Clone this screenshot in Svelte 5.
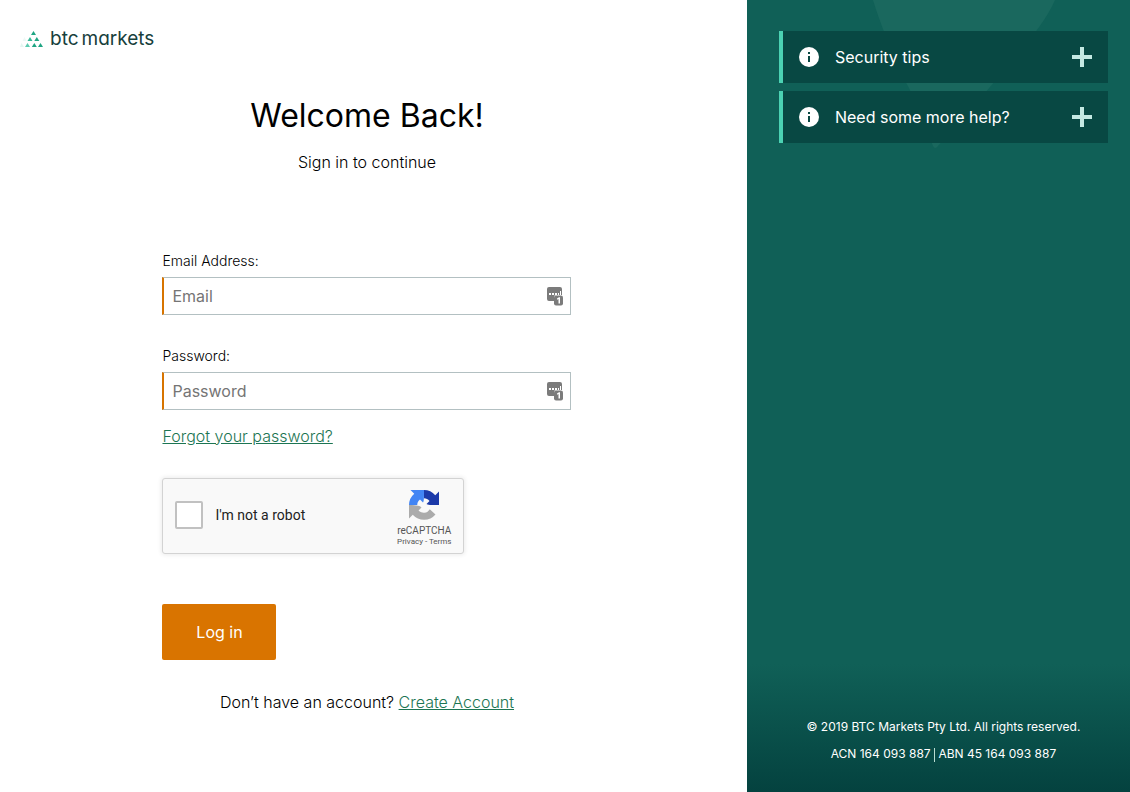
<script>
  const fields = [
    { id: 'email', label: 'Email Address:', placeholder: 'Email', type: 'email' },
    { id: 'password', label: 'Password:', placeholder: 'Password', type: 'password' },
  ];

  const tips = [
    {
      title: 'Security tips',
      body: 'Always check the address bar before you sign in, and never share your password.',
    },
    {
      title: 'Need some more help?',
      body: 'Visit our support centre or get in touch with the team.',
    },
  ];

  let values = $state({ email: '', password: '' });
  let human = $state(false);
  let open = $state(-1);

  function toggle(i) {
    open = open === i ? -1 : i;
  }

  function submit(e) {
    e.preventDefault();
  }
</script>

<div class="page">
  <main class="main">
    <a class="logo" href="#home" aria-label="btc markets">
      <svg width="24" height="18" viewBox="0 0 24 18" aria-hidden="true">
        <g fill="#1fa583">
          <path d="M13.5 1l2.5 4h-5z" />
          <path d="M16.8 7l2.500 4h-5z" />
          <path d="M14.300 13l2.500 4h-5z" />
          <path d="M20.500 13l2.500 4h-5z" />
        </g>
        <path d="M10 7l2.500 4h-5z" fill="#3bb898" />
        <path d="M7.500 13l2.500 4H5z" fill="#5ccbb0" />
        <path d="M1.500 13L4 17H0z" fill="#e3f6f1" />
        <path d="M4.500 7l2 4h-4z" fill="#eef9f6" />
      </svg>
      <span class="logo-text"><span>btc</span><span>markets</span></span>
    </a>

    <header class="intro">
      <h1>Welcome Back!</h1>
      <p>Sign in to continue</p>
    </header>

    <form class="form" onsubmit={submit}>
      {#each fields as field}
        <div class="field">
          <label for={field.id}>{field.label}</label>
          <div class="control">
            <input
              id={field.id}
              type={field.type}
              placeholder={field.placeholder}
              bind:value={values[field.id]}
            />
            <svg class="vault" width="17" height="19" viewBox="0 0 17 19" aria-hidden="true">
              <path
                fill="#7b7b7b"
                d="M2 0h11a2 2 0 0 1 2 2v6H9a2 2 0 0 0-2 2v4H2a2 2 0 0 1-2-2V2a2 2 0 0 1 2-2z"
              />
              <path fill="#fff" d="M2 6h2v2H2zM5 6h2v2H5zM8 6h2v2H8zM11 6h1v2h-1zM13 4h1v4h-1z" />
              <rect x="7" y="8.5" width="9" height="10" rx="2" fill="#7b7b7b" />
              <path fill="#fff" d="M10 11.500l2-1.300H13v6.300H11.500v-4.600l-1.500.8z" />
            </svg>
          </div>
        </div>
      {/each}

      <a class="forgot" href="#forgot">Forgot your password?</a>

      <div class="captcha">
        <label class="robot">
          <input type="checkbox" bind:checked={human} />
          <span>I'm not a robot</span>
        </label>
        <div class="brand">
          <svg width="32" height="32" viewBox="0 0 64 64" aria-hidden="true">
            <path
              fill="#1c3aa9"
              d="M62 32V5l-7.5 7.500A30 30 0 0 0 32 2v16.500c4.500 0 8 1.500 11 5.500l-6 6c2 2 8 2 25 2z"
            />
            <path
              fill="#4285f4"
              d="M32 2H5l7.500 7.500A30 30 0 0 0 2 32h16.500c0-4.500 1.500-8 5.500-11l6 6c2-2 2-8 2-25z"
            />
            <path
              fill="#ababab"
              d="M2 32v27l7.500-7.500A30 30 0 0 0 55 51L43.500 40.500A14 14 0 0 1 21 43l6-6c-2-3-8-5-25-5z"
            />
          </svg>
          <span class="brand-name">reCAPTCHA</span>
          <span class="brand-links"><a href="#privacy">Privacy</a> - <a href="#terms">Terms</a></span>
        </div>
      </div>

      <button class="login" type="submit">Log in</button>

      <p class="signup">Don’t have an account? <a href="#create">Create Account</a></p>
    </form>
  </main>

  <aside class="side">
    <svg class="shape" width="383" height="160" viewBox="0 0 383 160" aria-hidden="true">
      <path fill="#1a685e" d="M126 0C132 20 148 62 162 88Q174 114 186 146Q188 150 191 146Q222 112 243 87C265 60 296 28 308 0z" />
    </svg>

    <div class="tips">
      {#each tips as tip, i}
        <section class="tip">
          <button class="tip-head" type="button" aria-expanded={open === i} onclick={() => toggle(i)}>
            <svg width="20" height="20" viewBox="0 0 20 20" aria-hidden="true">
              <circle cx="10" cy="10" r="10" fill="#fff" />
              <path fill="#084843" d="M9 5h2v2H9zM9 9h2v6H9z" />
            </svg>
            <span class="tip-title">{tip.title}</span>
            <svg width="20" height="20" viewBox="0 0 20 20" aria-hidden="true">
              <path fill="#c4e9e3" d="M0 8h20v4H0z" />
              {#if open !== i}
                <path fill="#c4e9e3" d="M8 0h4v20H8z" />
              {/if}
            </svg>
          </button>
          {#if open === i}
            <p class="tip-body">{tip.body}</p>
          {/if}
        </section>
      {/each}
    </div>

    <footer class="legal">
      <p>© 2019 BTC Markets Pty Ltd. All rights reserved.</p>
      <p>ACN 164 093 887 <span class="bar"></span> ABN 45 164 093 887</p>
    </footer>
  </aside>
</div>

<style>
  :global(body) {
    font-family: Inter, 'Liberation Sans', sans-serif;
    color: #111;
    background: #fff;
  }

  .page {
    display: grid;
    grid-template-columns: 39fr 20fr;
    min-height: 100vh;
  }

  .page,
  .page * {
    box-sizing: border-box;
  }

  h1,
  p {
    margin: 0;
  }

  .main {
    display: flex;
    flex-direction: column;
    padding: 29px 13px 32px 0;
  }

  .logo {
    display: flex;
    align-self: flex-start;
    align-items: center;
    gap: 6px;
    height: 20px;
    margin-left: 20px;
    color: #17403c;
    text-decoration: none;
  }

  .logo-text {
    display: flex;
    gap: 3px;
    font-size: 19px;
    line-height: 20px;
    font-feature-settings: 'cv11';
  }

  .intro {
    margin-top: 47px;
    text-align: center;
  }

  .intro h1 {
    font-size: 32px;
    font-weight: 400;
    line-height: 40px;
    color: #000;
  }

  .intro p {
    margin-top: 14px;
    font-size: 16px;
    font-weight: 300;
    line-height: 24px;
    color: #000;
  }

  .form {
    width: 100%;
    max-width: 409px;
    margin: 76px auto 0;
  }

  .field {
    margin-bottom: 30px;
  }

  .field label {
    display: block;
    margin-bottom: 5px;
    font-size: 14px;
    font-weight: 300;
    line-height: 22px;
    color: #000;
  }

  .control {
    position: relative;
  }

  .control input {
    display: block;
    width: 100%;
    height: 38px;
    padding: 0 40px 0 8px;
    border: 1px solid #b3c0c2;
    border-left: 2px solid #d77400;
    border-radius: 0;
    background: #fff;
    font-family: inherit;
    font-size: 16px;
    color: #111;
  }

  .control input::placeholder {
    color: #757575;
    opacity: 1;
  }

  .vault {
    position: absolute;
    top: 10px;
    right: 7px;
  }

  .forgot {
    display: block;
    width: fit-content;
    margin-top: -16px;
    font-size: 16px;
    font-weight: 300;
    line-height: 24px;
  }

  .forgot,
  .signup a {
    color: #1c7553;
    text-decoration: underline;
  }

  .captcha {
    display: flex;
    justify-content: space-between;
    width: 302px;
    height: 76px;
    margin-top: 30px;
    padding: 0 12px;
    border: 1px solid #d3d3d3;
    border-radius: 3px;
    background: #f9f9f9;
    box-shadow: 0 0 4px 1px rgba(0, 0, 0, 0.08);
    font-family: Roboto, 'Liberation Sans', sans-serif;
  }

  .robot {
    display: flex;
    align-items: center;
    gap: 12px;
    padding-bottom: 3px;
    font-size: 14px;
    line-height: 16px;
    color: #222;
  }

  .robot input {
    appearance: none;
    width: 28px;
    height: 28px;
    margin: 0;
    border: 2px solid #c1c1c1;
    border-radius: 2px;
    background: #fff;
  }

  .robot input:checked {
    background: #1fa583;
  }

  .brand {
    display: flex;
    flex-direction: column;
    align-items: center;
    padding-top: 10px;
    color: #555;
  }

  .brand-name {
    margin-top: 4px;
    font-size: 10px;
    line-height: 12px;
  }

  .brand-links {
    font-size: 8px;
    line-height: 10px;
  }

  .brand-links a {
    color: inherit;
    text-decoration: none;
  }

  .login {
    display: block;
    width: 114px;
    height: 56px;
    margin-top: 50px;
    padding: 0;
    border: 0;
    border-radius: 2px;
    background: #d97400;
    font-family: inherit;
    font-size: 16px;
    color: #fff;
    cursor: pointer;
  }

  .signup {
    margin-top: 30px;
    font-size: 16px;
    font-weight: 300;
    line-height: 24px;
    color: #000;
    text-align: center;
  }

  .side {
    position: relative;
    display: flex;
    flex-direction: column;
    justify-content: space-between;
    padding: 31px 22px 25px 32px;
    overflow: hidden;
    background: linear-gradient(to top, #04423f, #106057 128px);
    color: #fff;
  }

  .shape {
    position: absolute;
    top: 0;
    left: 0;
  }

  .tips {
    position: relative;
    display: flex;
    flex-direction: column;
    gap: 8px;
  }

  .tip {
    border-left: 4px solid #4bd2b3;
    background: #084843;
  }

  .tip-head {
    display: flex;
    align-items: center;
    gap: 16px;
    width: 100%;
    height: 52px;
    padding: 0 16px;
    border: 0;
    background: none;
    font-family: inherit;
    font-size: 16px;
    color: #fff;
    text-align: left;
    cursor: pointer;
  }

  .tip-title {
    flex: 1;
  }

  .tip-body {
    padding: 0 16px 16px 52px;
    font-size: 14px;
    line-height: 22px;
  }

  .legal {
    font-size: 12px;
    line-height: 27px;
    text-align: center;
  }

  .bar {
    display: inline-block;
    width: 1px;
    height: 14px;
    background: #b9dcd2;
    vertical-align: middle;
  }

  @media (max-width: 780px) {
    .page {
      grid-template-columns: 1fr;
    }

    .main {
      padding: 28px 16px 32px;
    }

    .side {
      gap: 48px;
    }
  }
</style>
